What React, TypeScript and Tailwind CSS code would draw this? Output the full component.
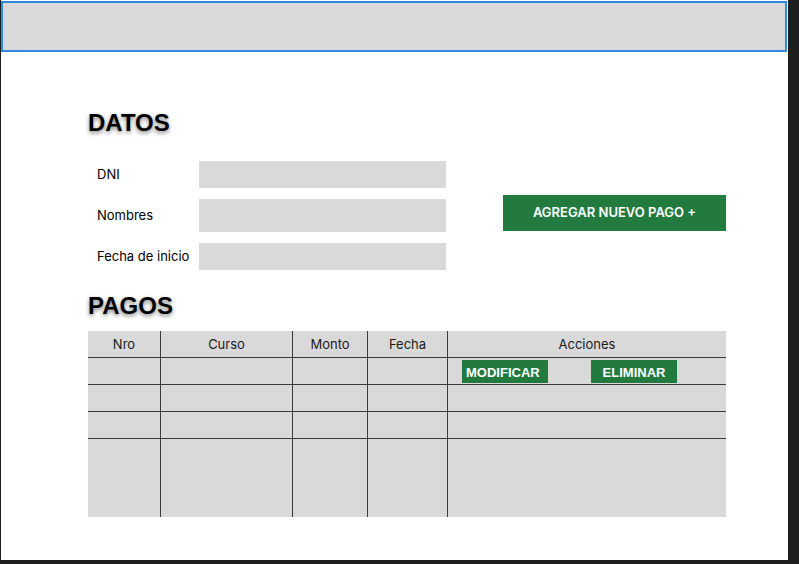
import React from "react";

const cols = ["Nro", "Curso", "Monto", "Fecha", "Acciones"];

export default function App() {
  const rows = [0, 1, 2, 3, 4];
  return (
    <div className="w-[799px] h-[564px] bg-[#1e1e1e] overflow-hidden" style={{ fontFamily: "Inter, 'Liberation Sans', sans-serif" }}>
      <div className="w-[788px] h-[560px] bg-white border-l border-[#1e1e1e] flex flex-col">
        <div className="mt-[1px] w-[786px] h-[51px] bg-[#d9d9d9] border-2 border-[#2f8ae0]" />
        <div className="pl-[87px] flex flex-col">
          <h1
            className="mt-[57px] h-[28px] leading-[28px] text-[24px] font-bold text-black"
            style={{ fontFamily: "'Liberation Sans', Arial, sans-serif", textShadow: "0 2px 4px rgba(0,0,0,0.5)" }}
          >
            DATOS
          </h1>
          <div className="mt-[24px] w-[638px] flex items-center justify-between">
            <div className="flex flex-col gap-[11px]">
              <div className="flex items-center">
                <span className="w-[111px] pl-[9px] text-[13px] text-black">DNI</span>
                <div className="w-[247px] h-[27px] bg-[#d9d9d9]" />
              </div>
              <div className="flex items-center">
                <span className="w-[111px] pl-[9px] text-[13px] text-black">Nombres</span>
                <div className="w-[247px] h-[33px] bg-[#d9d9d9]" />
              </div>
              <div className="flex items-center">
                <span className="w-[111px] pl-[9px] text-[13px] text-black">Fecha de inicio</span>
                <div className="w-[247px] h-[27px] bg-[#d9d9d9]" />
              </div>
            </div>
            <button className="w-[223px] h-[36px] mb-[5px] bg-[#237a3f] text-white text-[13px] font-semibold">
              AGREGAR NUEVO PAGO +
            </button>
          </div>
          <h2
            className="mt-[22px] h-[28px] leading-[28px] text-[24px] font-bold text-black"
            style={{ fontFamily: "'Liberation Sans', Arial, sans-serif", textShadow: "0 2px 4px rgba(0,0,0,0.5)" }}
          >
            PAGOS
          </h2>
          <div className="mt-[11px] w-[638px] grid grid-cols-[72px_132px_75px_80px_279px] grid-rows-[26px_27px_27px_27px_79px] bg-[#d9d9d9]">
            {rows.map((r) =>
              cols.map((c, ci) => (
                <div
                  key={`${r}-${ci}`}
                  className={`${ci > 0 ? "border-l border-[#3a3a3a]" : ""} ${r > 0 ? "border-t border-[#3a3a3a]" : ""} flex items-center ${r === 0 ? "justify-center pt-[2px] text-[13px] text-[#1a1a1a]" : ""}`}
                >
                  {r === 0 ? c : null}
                  {r === 1 && ci === 4 ? (
                    <div className="flex self-start mt-[2px] ml-[14px] gap-[43px]" style={{ fontFamily: "'Liberation Sans', Arial, sans-serif" }}>
                      <span className="w-[86px] h-[23px] bg-[#237a3f] text-white text-[13px] font-bold pl-[4px] leading-[26px]">MODIFICAR</span>
                      <span className="w-[86px] h-[23px] bg-[#237a3f] text-white text-[13px] font-bold text-center leading-[26px]">ELIMINAR</span>
                    </div>
                  ) : null}
                </div>
              ))
            )}
          </div>
        </div>
      </div>
    </div>
  );
}
